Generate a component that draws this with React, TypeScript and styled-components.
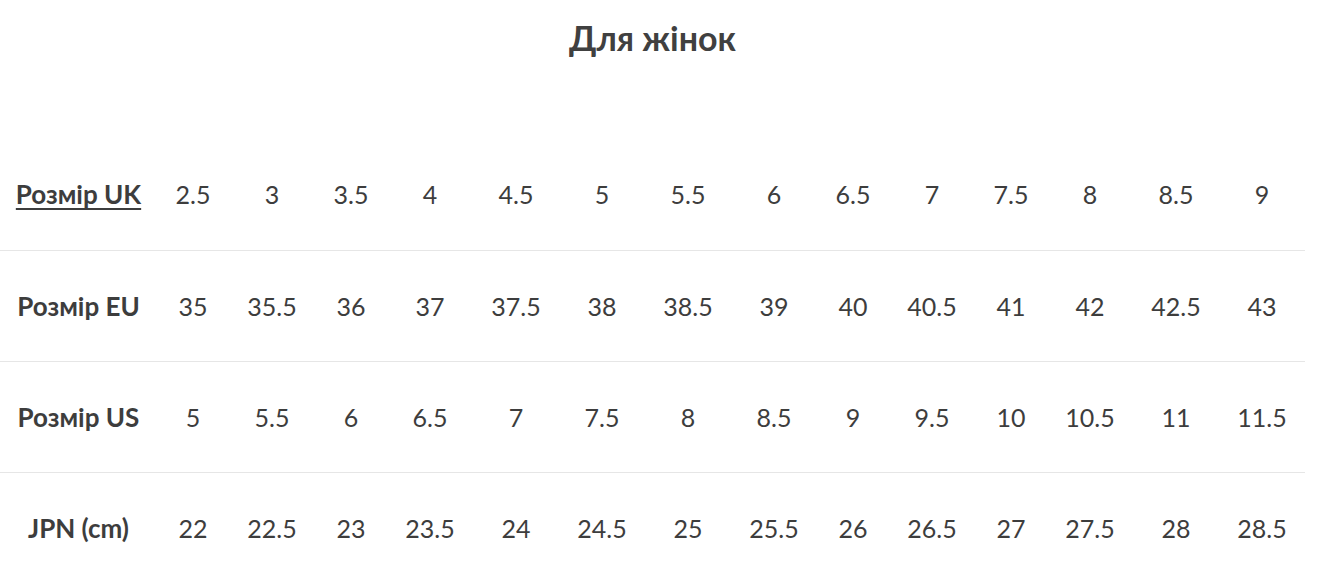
import styled, { createGlobalStyle } from "styled-components";

const GlobalStyle = createGlobalStyle`
  html, body {
    margin: 0;
    padding: 0;
    background: #fff;
  }
  body {
    font-family: "Lato", "Noto Sans", sans-serif;
    color: #3d3d3d;
  }
`;

const Page = styled.div`
  width: 1305px;
`;

const Title = styled.h2`
  margin: 0;
  padding-top: 17px;
  height: 139px;
  box-sizing: border-box;
  text-align: center;
  font-size: 34px;
  font-weight: 700;
  line-height: 42px;
  color: #404040;
`;

const Table = styled.table`
  width: 1305px;
  border-collapse: collapse;
  table-layout: fixed;
`;

const Col = styled.col<{ $w: number }>`
  width: ${(p) => p.$w}px;
`;

const Row = styled.tr`
  height: 111px;
  & + & {
    border-top: 1px solid #e6e6e6;
  }
`;

const HeadCell = styled.th`
  padding: 0;
  text-align: center;
  font-size: 26px;
  font-weight: 700;
  color: #3d3d3d;
  white-space: nowrap;
`;

const LabelLink = styled.a`
  color: inherit;
  text-decoration: underline;
  text-decoration-thickness: 2px;
  text-underline-offset: 4px;
`;

const Cell = styled.td`
  padding: 0;
  text-align: center;
  font-size: 25px;
  font-weight: 400;
  color: #3d3d3d;
`;

const A = 72;
const B = 86;
const widths = [157, A, B, A, B, B, B, B, B, A, B, A, B, B, B];

interface IRow {
  label: string;
  link?: boolean;
  values: string[];
}

const rows: IRow[] = [
  {
    label: "Розмір UK",
    link: true,
    values: ["2.5", "3", "3.5", "4", "4.5", "5", "5.5", "6", "6.5", "7", "7.5", "8", "8.5", "9"],
  },
  {
    label: "Розмір EU",
    values: ["35", "35.5", "36", "37", "37.5", "38", "38.5", "39", "40", "40.5", "41", "42", "42.5", "43"],
  },
  {
    label: "Розмір US",
    values: ["5", "5.5", "6", "6.5", "7", "7.5", "8", "8.5", "9", "9.5", "10", "10.5", "11", "11.5"],
  },
  {
    label: "JPN (cm)",
    values: ["22", "22.5", "23", "23.5", "24", "24.5", "25", "25.5", "26", "26.5", "27", "27.5", "28", "28.5"],
  },
];

const App = () => {
  return (
    <Page>
      <GlobalStyle />
      <Title>Для жінок</Title>
      <Table>
        <colgroup>
          {widths.map((w, i) => (
            <Col key={i} $w={w} />
          ))}
        </colgroup>
        <tbody>
          {rows.map((row) => (
            <Row key={row.label}>
              <HeadCell>
                {row.link ? <LabelLink href="#">{row.label}</LabelLink> : row.label}
              </HeadCell>
              {row.values.map((v, i) => (
                <Cell key={i}>{v}</Cell>
              ))}
            </Row>
          ))}
        </tbody>
      </Table>
    </Page>
  );
};

export default App;
